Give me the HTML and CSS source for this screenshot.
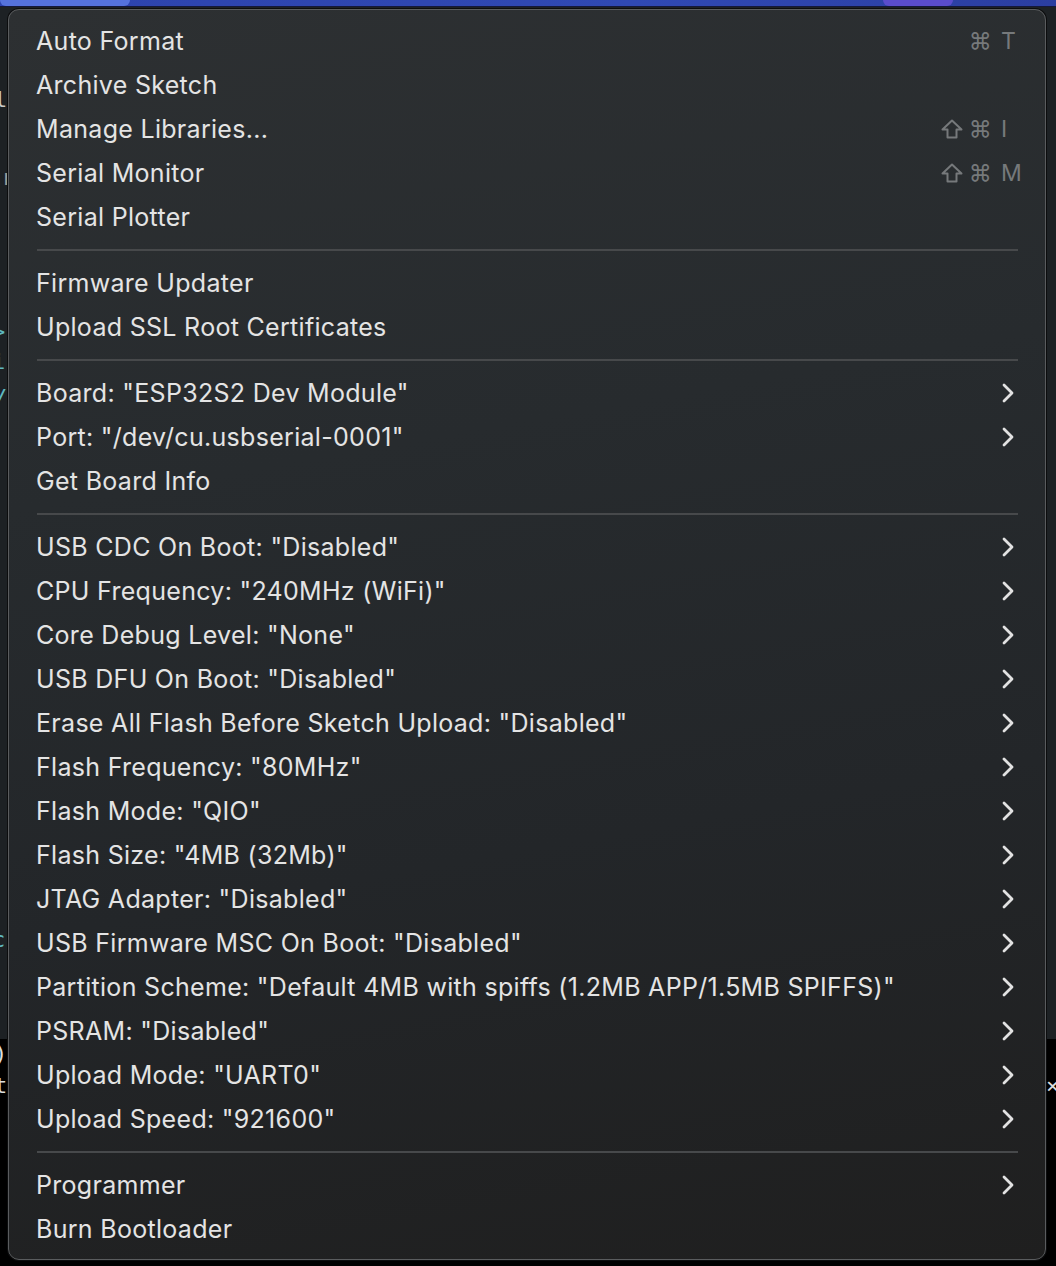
FILE: index.html
```html
<!DOCTYPE html>
<html>
<head>
<meta charset="utf-8">
<link rel="stylesheet" href="styles.css">
</head>
<body>
<div class="backdrop">
  <div class="topbar"><span class="pill pill-left"></span><span class="pill pill-right"></span></div>
  <div class="editor">
    <span class="frag f1">le</span>
    <span class="frag f2">ar</span>
    <span class="frag f3">&gt;</span>
    <span class="frag f4">i</span>
    <span class="frag f5">/</span>
    <span class="frag f6">c</span>
  </div>
  <div class="console"><span class="frag f7">)</span><span class="frag f8">t</span><span class="frag f9">×</span></div>
</div>

<div class="menu">
  <div class="item"><span class="label">Auto Format</span><span class="key"><span class="mods">⌘</span><span class="letter">T</span></span></div>
  <div class="item"><span class="label">Archive Sketch</span></div>
  <div class="item"><span class="label">Manage Libraries...</span><span class="key"><span class="mods"><svg class="shift" viewBox="0 0 22 20"><path d="M11 1.5 L20.5 10.5 H15.5 V18.5 H6.5 V10.5 H1.5 Z"/></svg>⌘</span><span class="letter">I</span></span></div>
  <div class="item"><span class="label">Serial Monitor</span><span class="key"><span class="mods"><svg class="shift" viewBox="0 0 22 20"><path d="M11 1.5 L20.5 10.5 H15.5 V18.5 H6.5 V10.5 H1.5 Z"/></svg>⌘</span><span class="letter">M</span></span></div>
  <div class="item"><span class="label">Serial Plotter</span></div>
  <div class="sep"></div>
  <div class="item"><span class="label">Firmware Updater</span></div>
  <div class="item"><span class="label">Upload SSL Root Certificates</span></div>
  <div class="sep"></div>
  <div class="item sub"><span class="label">Board: "ESP32S2 Dev Module"</span><svg class="chev" viewBox="0 0 12 20"><path d="M2 2 L10 10 L2 18"/></svg></div>
  <div class="item sub"><span class="label">Port: "/dev/cu.usbserial-0001"</span><svg class="chev" viewBox="0 0 12 20"><path d="M2 2 L10 10 L2 18"/></svg></div>
  <div class="item"><span class="label">Get Board Info</span></div>
  <div class="sep"></div>
  <div class="item sub"><span class="label">USB CDC On Boot: "Disabled"</span><svg class="chev" viewBox="0 0 12 20"><path d="M2 2 L10 10 L2 18"/></svg></div>
  <div class="item sub"><span class="label">CPU Frequency: "240MHz (WiFi)"</span><svg class="chev" viewBox="0 0 12 20"><path d="M2 2 L10 10 L2 18"/></svg></div>
  <div class="item sub"><span class="label">Core Debug Level: "None"</span><svg class="chev" viewBox="0 0 12 20"><path d="M2 2 L10 10 L2 18"/></svg></div>
  <div class="item sub"><span class="label">USB DFU On Boot: "Disabled"</span><svg class="chev" viewBox="0 0 12 20"><path d="M2 2 L10 10 L2 18"/></svg></div>
  <div class="item sub"><span class="label">Erase All Flash Before Sketch Upload: "Disabled"</span><svg class="chev" viewBox="0 0 12 20"><path d="M2 2 L10 10 L2 18"/></svg></div>
  <div class="item sub"><span class="label">Flash Frequency: "80MHz"</span><svg class="chev" viewBox="0 0 12 20"><path d="M2 2 L10 10 L2 18"/></svg></div>
  <div class="item sub"><span class="label">Flash Mode: "QIO"</span><svg class="chev" viewBox="0 0 12 20"><path d="M2 2 L10 10 L2 18"/></svg></div>
  <div class="item sub"><span class="label">Flash Size: "4MB (32Mb)"</span><svg class="chev" viewBox="0 0 12 20"><path d="M2 2 L10 10 L2 18"/></svg></div>
  <div class="item sub"><span class="label">JTAG Adapter: "Disabled"</span><svg class="chev" viewBox="0 0 12 20"><path d="M2 2 L10 10 L2 18"/></svg></div>
  <div class="item sub"><span class="label">USB Firmware MSC On Boot: "Disabled"</span><svg class="chev" viewBox="0 0 12 20"><path d="M2 2 L10 10 L2 18"/></svg></div>
  <div class="item sub"><span class="label">Partition Scheme: "Default 4MB with spiffs (1.2MB APP/1.5MB SPIFFS)"</span><svg class="chev" viewBox="0 0 12 20"><path d="M2 2 L10 10 L2 18"/></svg></div>
  <div class="item sub"><span class="label">PSRAM: "Disabled"</span><svg class="chev" viewBox="0 0 12 20"><path d="M2 2 L10 10 L2 18"/></svg></div>
  <div class="item sub"><span class="label">Upload Mode: "UART0"</span><svg class="chev" viewBox="0 0 12 20"><path d="M2 2 L10 10 L2 18"/></svg></div>
  <div class="item sub"><span class="label">Upload Speed: "921600"</span><svg class="chev" viewBox="0 0 12 20"><path d="M2 2 L10 10 L2 18"/></svg></div>
  <div class="sep"></div>
  <div class="item sub"><span class="label">Programmer</span><svg class="chev" viewBox="0 0 12 20"><path d="M2 2 L10 10 L2 18"/></svg></div>
  <div class="item"><span class="label">Burn Bootloader</span></div>
</div>
</body>
</html>
```

FILE: styles.css
```css
* { box-sizing: border-box; }
html, body { margin: 0; padding: 0; }
body {
  width: 1056px;
  height: 1266px;
  overflow: hidden;
  background: #1c1f22;
  font-family: Inter, "Noto Sans", "Liberation Sans", sans-serif;
  position: relative;
}

.backdrop {
  display: flex;
  flex-direction: column;
  height: 1266px;
}
.topbar {
  height: 7px;
  background: linear-gradient(90deg, #2d43ad, #3049b3 60%, #2b3ea0);
  border-bottom: 1px solid #15183a;
  position: relative;
  flex: none;
}
.pill {
  position: absolute;
  top: 0;
  height: 6px;
  border-radius: 0 0 6px 6px;
}
.pill-left { left: 0; width: 130px; background: #5572dc; }
.pill-right { left: 883px; width: 70px; background: #5a4ccc; }

.editor {
  height: 1032px;
  background: #1d2124;
  flex: none;
  position: relative;
}
.console {
  flex: 1;
  background: #000;
  position: relative;
}
.frag {
  position: absolute;
  font-family: "DejaVu Sans Mono", monospace;
  font-size: 22px;
  color: #5fb9c0;
}
.f1 { left: -6px; top: 80px; color: #c9c9c9; }
.f2 { left: -12px; top: 158px; color: #9a9a9a; }
.f3 { left: -8px; top: 312px; }
.f4 { left: -8px; top: 342px; }
.f5 { left: -6px; top: 378px; }
.f6 { left: -8px; top: 920px; }
.f7 { left: -6px; top: 2px; color: #ddd; }
.f8 { left: -6px; top: 34px; color: #ddd; }
.f9 { left: 1046px; top: 34px; color: #ddd; }

.menu {
  position: absolute;
  left: 8px;
  top: 9px;
  width: 1038px;
  height: 1251px;
  padding: 9px 0 8px 0;
  border: 1px solid #5a5c5e;
  border-radius: 11px;
  background: linear-gradient(170deg, #2d3032 0%, #272b2e 35%, #232629 65%, #1f1f1f 100%);
  box-shadow: 0 0 0 1px #0c0d0e;
  color: #e4e4e4;
}
.item {
  height: 44px;
  display: flex;
  align-items: center;
  justify-content: space-between;
  padding: 0 29px 0 27px;
  font-size: 25px;
  letter-spacing: 0.3px;
}
.label { white-space: nowrap; }
.key {
  display: flex;
  align-items: center;
  color: #76797b;
  font-size: 23px;
  margin-right: 4px;
}
.mods {
  display: flex;
  align-items: center;
  justify-content: flex-end;
  gap: 6px;
}
.letter {
  width: 11px;
  margin-left: 9px;
  text-align: left;
  white-space: nowrap;
}
.shift {
  width: 22px;
  height: 20px;
  fill: none;
  stroke: #76797b;
  stroke-width: 2;
  stroke-linejoin: round;
}
.chev {
  width: 12px;
  height: 20px;
  fill: none;
  stroke: #e2e2e2;
  stroke-width: 2.8;
  stroke-linecap: round;
  stroke-linejoin: round;
  margin-right: 2px;
}
.sep {
  height: 2px;
  margin: 10px 27px 10px 28px;
  background: #47494b;
}
```
